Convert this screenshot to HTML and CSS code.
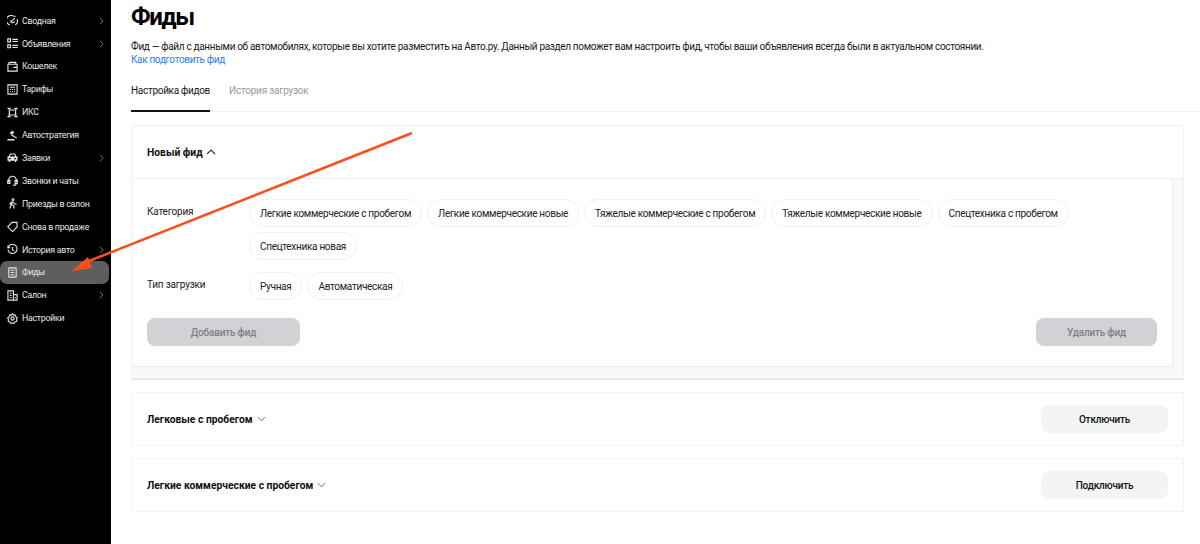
FILE: index.html
```html
<!DOCTYPE html>
<html lang="ru">
<head>
<meta charset="utf-8">
<title>Фиды</title>
<link rel="stylesheet" href="styles.css">
</head>
<body>
<div class="app">
  <nav class="side">
    <a class="item"><svg class="ic" viewBox="0 0 12 12"><path d="M3 10.800A5.200 5.200 0 0 1 6 .8a5.200 5.200 0 0 1 3.200 1.100M11 4.500A5.200 5.200 0 0 1 9 10.800"/><path d="M4.600 7.300l4-3.800M3.800 6a2.300 2.300 0 0 0 4.400 1"/></svg><span class="lbl">Сводная</span><svg class="chev" viewBox="0 0 6 10"><path d="M1 1l4 4-4 4"/></svg></a>
    <a class="item"><svg class="ic" viewBox="0 0 12 12"><path d="M.8 1h3v3.200h-3zM.8 7.500h3v3.200h-3zM5.800 1.500h6M5.800 3.800h6M5.800 8h6M5.800 10.300h6"/></svg><span class="lbl">Объявления</span><svg class="chev" viewBox="0 0 6 10"><path d="M1 1l4 4-4 4"/></svg></a>
    <a class="item"><svg class="ic" viewBox="0 0 12 12"><path d="M2 3.500V2.500A1 1 0 0 1 3 1.500h6.500v2M1 3.500h10v7.500H1zM7 7h4"/></svg><span class="lbl">Кошелек</span></a>
    <a class="item"><svg class="ic" viewBox="0 0 12 12"><path d="M1 1h10v10H1zM3.300 3.500h5.400M3.300 6h1.200M5.400 6h1.200M7.500 6h1.200M3.300 8.500h1.200M5.400 8.500h1.200M7.500 8.500h1.200"/></svg><span class="lbl">Тарифы</span></a>
    <a class="item"><svg class="ic" viewBox="0 0 12 12"><path d="M.5 1.500h3.500M8 1.500h3.500M.5 10.500h3.500M8 10.500h3.500M2 1.500q1.500 4.500 0 9M10 1.500q-1.500 4.500 0 9M3 3.300h6M3 8.700h6"/></svg><span class="lbl">ИКС</span></a>
    <a class="item"><svg class="ic ic-fill" viewBox="0 0 12 12"><path d="M5.500 .5l2.500 2-2.500 3-2.500-2zM5.500 5l5.500 3.500-.6.800-5.900-3.300zM1 9.800h6.500l1.200 1.700H0z"/></svg><span class="lbl">Автостратегия</span></a>
    <a class="item"><svg class="ic ic-fill" viewBox="0 0 12 12"><path d="M3 1.500h6l1 3 1.500.5v4.500H10v1.500H8.500V9.500h-5V11H2V9.500H.5V5L2 4.500zM3.800 2.800l-.6 2h5.600l-.6-2zM2 6.500v1.500h2V6.500zM8 6.500v1.500h2V6.500z"/></svg><span class="lbl">Заявки</span><svg class="chev" viewBox="0 0 6 10"><path d="M1 1l4 4-4 4"/></svg></a>
    <a class="item"><svg class="ic" viewBox="0 0 12 12"><path d="M1.800 8V5.500a4.200 4.200 0 0 1 8.400 0V8M.8 5.800h2.400v3.400H.8zM8.800 5.800h2.400v3.400H8.800zM10 9.500q0 1.800-3.500 1.800"/></svg><span class="lbl">Звонки и чаты</span></a>
    <a class="item"><svg class="ic" viewBox="0 0 12 12"><circle cx="6.500" cy="1.800" r="1"/><path d="M6 4L3 11.500M6 4l2.500 2.500h2M6 4L3.500 5.500v2M5 7l2.500 1.500v3"/></svg><span class="lbl">Приезды в салон</span></a>
    <a class="item"><svg class="ic" viewBox="0 0 12 12"><path d="M5.500 1.500h5.500v5L6 11.500 .8 6.300zM8.500 3.500h.01"/></svg><span class="lbl">Снова в продаже</span></a>
    <a class="item"><svg class="ic" viewBox="0 0 12 12"><path d="M1.300 3.500A5 5 0 1 1 1 6M1 1.500v2.500h2.500M6 3.200V6.300l2 1.200"/></svg><span class="lbl">История авто</span><svg class="chev" viewBox="0 0 6 10"><path d="M1 1l4 4-4 4"/></svg></a>
    <a class="item active"><svg class="ic" viewBox="0 0 12 12"><path d="M2.500 1h7a.5.5 0 0 1 .5.500v9a.5.5 0 0 1-.5.500h-7a.5.5 0 0 1-.5-.5v-9a.5.5 0 0 1 .5-.5zM4 3.500h4M4 6h4M4 8.500h4"/></svg><span class="lbl">Фиды</span></a>
    <a class="item"><svg class="ic" viewBox="0 0 12 12"><path d="M1 1h6v10H1zM7 5h4v6H7zM3 3.500h2M3 6h2M3 8.500h2M9 7.500v1.500"/></svg><span class="lbl">Салон</span><svg class="chev" viewBox="0 0 6 10"><path d="M1 1l4 4-4 4"/></svg></a>
    <a class="item"><svg class="ic" viewBox="0 0 12 12"><path d="M6 .8l1.300 1.500 2-.1.400 2 1.600 1.300-1 1.700.4 2-2 .6-1 1.700L6 10.700l-1.700.8-1-1.700-2-.6.4-2-1-1.700 1.600-1.300.4-2 2 .1z"/><circle cx="6" cy="6" r="1.800"/></svg><span class="lbl">Настройки</span></a>
  </nav>

  <main class="main">
    <h1 class="title">Фиды</h1>
    <p class="intro">Фид — файл с данными об автомобилях, которые вы хотите разместить на Авто.ру. Данный раздел поможет вам настроить фид, чтобы ваши объявления всегда были в актуальном состоянии.<br><a class="link">Как подготовить фид</a></p>
    <div class="tabs">
      <span class="tab on">Настройка фидов</span>
      <span class="tab">История загрузок</span>
    </div>

    <section class="card new">
      <div class="head">
        <b class="name">Новый фид</b>
        <svg class="caret up" viewBox="0 0 10 6"><path d="M1 5l4-4 4 4"/></svg>
      </div>
      <div class="scroll">
        <div class="form">
          <div class="row">
            <div class="rlabel">Категория</div>
            <div class="chips">
              <span class="chip">Легкие коммерческие с пробегом</span>
              <span class="chip">Легкие коммерческие новые</span>
              <span class="chip">Тяжелые коммерческие с пробегом</span>
              <span class="chip">Тяжелые коммерческие новые</span>
              <span class="chip">Спецтехника с пробегом</span>
              <span class="chip">Спецтехника новая</span>
            </div>
          </div>
          <div class="row">
            <div class="rlabel">Тип загрузки</div>
            <div class="chips">
              <span class="chip">Ручная</span>
              <span class="chip">Автоматическая</span>
            </div>
          </div>
          <div class="actions">
            <span class="btn off add">Добавить фид</span>
            <span class="btn off del">Удалить фид</span>
          </div>
        </div>
      </div>
    </section>

    <section class="card line">
      <b class="name">Легковые с пробегом</b>
      <svg class="caret" viewBox="0 0 10 6"><path d="M1 1l4 4 4-4"/></svg>
      <span class="btn ghost">Отключить</span>
    </section>
    <section class="card line second">
      <b class="name">Легкие коммерческие с пробегом</b>
      <svg class="caret" viewBox="0 0 10 6"><path d="M1 1l4 4 4-4"/></svg>
      <span class="btn ghost">Подключить</span>
    </section>
  </main>
</div>
<svg class="arrow" viewBox="0 0 1200 544"><path class="shaft" d="M412 133L84 263"/><path class="head-a" d="M72 271L88 257L92 268z"/></svg>
</body>
</html>
```

FILE: styles.css
```css
* { box-sizing: border-box; }
html, body { margin: 0; height: 544px; overflow: hidden; background: #fff; }
body { font-family: Roboto, "Noto Sans", sans-serif; color: #1a1a1a; position: relative; }
.app { display: flex; height: 544px; }

.side { width: 111px; flex: none; background: #000; padding-top: 9.200px; display: flex; flex-direction: column; }
.item { height: 22.9px; flex: none; display: flex; align-items: center; padding: 0 5px 0 7px; color: #e6e6e6; font-size: 8.8px; letter-spacing: -.27px; width: 109px; border-radius: 7px; }
.item.active { background: #5e5e5e; }
.ic { width: 11px; height: 11px; flex: none; margin-right: 4px; fill: none; stroke: #e6e6e6; stroke-width: 1.2; }
.ic-fill { fill: #e6e6e6; stroke: none; fill-rule: evenodd; }
.lbl { flex: 1; white-space: nowrap; }
.chev { width: 5px; height: 8px; flex: none; fill: none; stroke: #8c8c8c; stroke-width: 1; }

.main { flex: 1; min-width: 0; padding-left: 20px; padding-right: 16px; }
.title { margin: 3px 0 0; font-size: 24px; line-height: 28px; font-weight: 700; letter-spacing: -1.4px; color: #000; }
.intro { margin: 9px 0 0; font-size: 10px; line-height: 13px; letter-spacing: -.33px; color: #1a1a1a; white-space: nowrap; }
.link { color: #2b7de9; }
.tabs { display: flex; gap: 19px; margin: 6px -16px 13px 0; border-bottom: 1px solid #f0f0f0; height: 40px; }
.tab { font-size: 10px; letter-spacing: -.24px; line-height: 13px; color: #9b9b9b; padding-top: 12px; height: 40px; }
.tab.on { color: #1a1a1a; letter-spacing: -.3px; border-bottom: 2px solid #111; }

.card { border: 1px solid #f2f2f2; border-radius: 2px; background: #fff; }
.new { height: 254px; background: #f9f9f9; border-color: #f0f0f0; box-shadow: 0 1px 0 #e6e6e6; }
.head { height: 53px; background: #fff; padding-left: 15px; display: flex; align-items: center; border-bottom: 1px solid #f0f0f0; }
.name { font-size: 10.300px; font-weight: 700; color: #111; white-space: nowrap; }
.caret { width: 9px; height: 6px; margin-left: 4px; fill: none; stroke: #555; stroke-width: 1; flex: none; }
.up { width: 10px; margin-left: 3px; stroke: #333; stroke-width: 1.100; }
.scroll { width: 1041px; height: 188px; background: #fff; border-right: 1px solid #ececec; border-bottom: 1px solid #ececec; }
.form { padding: 20px 15px 0 15px; }
.row { display: flex; margin-bottom: 12px; }
.rlabel { width: 102px; flex: none; font-size: 10px; letter-spacing: -.2px; line-height: 13px; color: #222; padding-top: 5.500px; }
.chips { display: flex; flex-wrap: wrap; gap: 5px 5px; flex: 1; }
.chip { height: 28px; border: 1px solid #f0f0f0; border-radius: 14px; padding: 0 10px; font-size: 10px; letter-spacing: -.3px; line-height: 27px; color: #222; white-space: nowrap; }
.actions { display: flex; justify-content: space-between; margin-top: 18px; }
.btn { display: flex; align-items: center; justify-content: center; height: 28px; border-radius: 8px; font-size: 10px; letter-spacing: -.2px; font-weight: 500; white-space: nowrap; }
.off { background: #d1d1d6; color: #808085; }
.add { width: 153px; }
.del { width: 121px; }
.line { display: flex; align-items: center; height: 54px; padding: 0 15px 0 15px; margin-top: 13px; }
.second { margin-top: 12px; }
.ghost { width: 127px; background: #f3f4f6; color: #111; margin-left: auto; }

.arrow { position: absolute; left: 0; top: 0; width: 1200px; height: 544px; pointer-events: none; }
.shaft { stroke: #fa4f1c; stroke-width: 2.500; fill: none; }
.head-a { fill: #fa4f1c; }
```
